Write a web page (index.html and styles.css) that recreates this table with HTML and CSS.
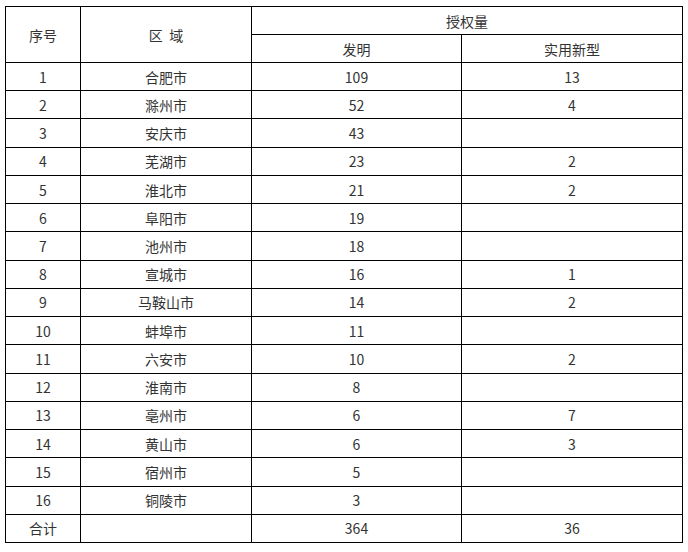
FILE: index.html
```html
<!DOCTYPE html>
<html lang="zh">
<head>
<meta charset="utf-8">
<link rel="stylesheet" href="styles.css">
</head>
<body>
<table class="grid">
  <colgroup>
    <col class="c1"><col class="c2"><col class="c3"><col class="c4">
  </colgroup>
  <thead>
    <tr><th rowspan="2">序号</th><th rowspan="2">区&nbsp;&nbsp;域</th><th colspan="2">授权量</th></tr>
    <tr><th>发明</th><th>实用新型</th></tr>
  </thead>
  <tbody>
    <tr><td>1</td><td>合肥市</td><td>109</td><td>13</td></tr>
    <tr><td>2</td><td>滁州市</td><td>52</td><td>4</td></tr>
    <tr><td>3</td><td>安庆市</td><td>43</td><td></td></tr>
    <tr><td>4</td><td>芜湖市</td><td>23</td><td>2</td></tr>
    <tr><td>5</td><td>淮北市</td><td>21</td><td>2</td></tr>
    <tr><td>6</td><td>阜阳市</td><td>19</td><td></td></tr>
    <tr><td>7</td><td>池州市</td><td>18</td><td></td></tr>
    <tr><td>8</td><td>宣城市</td><td>16</td><td>1</td></tr>
    <tr><td>9</td><td>马鞍山市</td><td>14</td><td>2</td></tr>
    <tr><td>10</td><td>蚌埠市</td><td>11</td><td></td></tr>
    <tr><td>11</td><td>六安市</td><td>10</td><td>2</td></tr>
    <tr><td>12</td><td>淮南市</td><td>8</td><td></td></tr>
    <tr><td>13</td><td>亳州市</td><td>6</td><td>7</td></tr>
    <tr><td>14</td><td>黄山市</td><td>6</td><td>3</td></tr>
    <tr><td>15</td><td>宿州市</td><td>5</td><td></td></tr>
    <tr><td>16</td><td>铜陵市</td><td>3</td><td></td></tr>
    <tr><td>合计</td><td></td><td>364</td><td>36</td></tr>
  </tbody>
</table>
</body>
</html>
```
FILE: styles.css
```css
html, body {
  margin: 0;
  padding: 0;
  background: #ffffff;
}
body {
  padding: 6px 0 0 5px;
  font-family: "Microsoft YaHei", "Noto Sans CJK SC", "Noto Sans", sans-serif;
  font-size: 14px;
  color: #333333;
}
.grid {
  border-collapse: collapse;
  table-layout: fixed;
  width: 677px;
}
.c1 { width: 75px; }
.c2 { width: 171px; }
.c3 { width: 210px; }
.c4 { width: 221px; }
.grid th, .grid td {
  border: 1px solid #000000;
  padding: 0;
  text-align: center;
  vertical-align: middle;
  font-weight: normal;
  line-height: 18px;
  white-space: nowrap;
}
.grid thead tr { height: 28px; }
.grid tbody tr { height: 28.24px; }
```
